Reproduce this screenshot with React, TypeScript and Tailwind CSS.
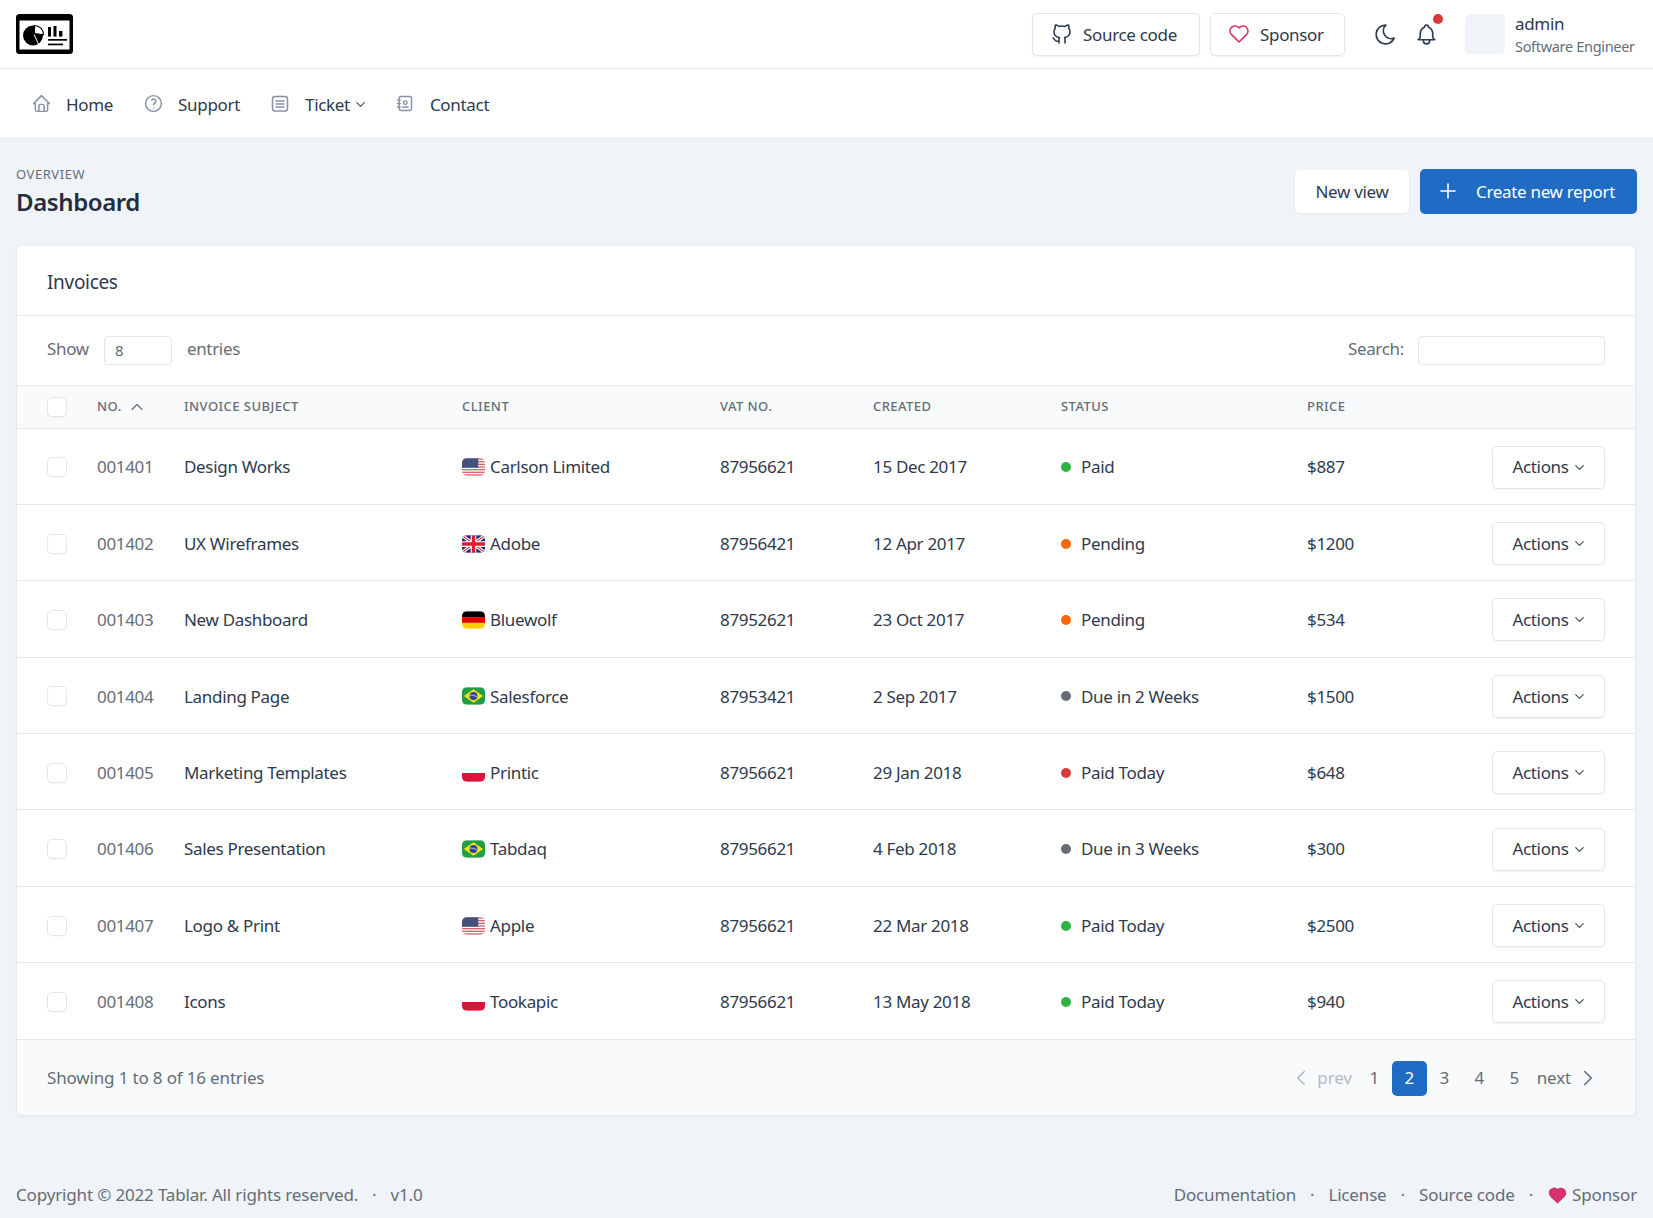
import React from "react";
import {
  TbAddressBook,
  TbBell,
  TbBrandGithub,
  TbChevronDown,
  TbChevronLeft,
  TbChevronRight,
  TbChevronUp,
  TbHeart,
  TbHeartFilled,
  TbHelp,
  TbHome,
  TbMoon,
  TbPlus,
} from "react-icons/tb";

type Flag = "us" | "gb" | "de" | "br" | "pl";

const invoices: {
  no: string;
  subject: string;
  flag: Flag;
  client: string;
  vat: string;
  created: string;
  dot: string;
  status: string;
  price: string;
}[] = [
  { no: "001401", subject: "Design Works", flag: "us", client: "Carlson Limited", vat: "87956621", created: "15 Dec 2017", dot: "bg-[#2fb344]", status: "Paid", price: "$887" },
  { no: "001402", subject: "UX Wireframes", flag: "gb", client: "Adobe", vat: "87956421", created: "12 Apr 2017", dot: "bg-[#f76707]", status: "Pending", price: "$1200" },
  { no: "001403", subject: "New Dashboard", flag: "de", client: "Bluewolf", vat: "87952621", created: "23 Oct 2017", dot: "bg-[#f76707]", status: "Pending", price: "$534" },
  { no: "001404", subject: "Landing Page", flag: "br", client: "Salesforce", vat: "87953421", created: "2 Sep 2017", dot: "bg-[#656d77]", status: "Due in 2 Weeks", price: "$1500" },
  { no: "001405", subject: "Marketing Templates", flag: "pl", client: "Printic", vat: "87956621", created: "29 Jan 2018", dot: "bg-[#d63939]", status: "Paid Today", price: "$648" },
  { no: "001406", subject: "Sales Presentation", flag: "br", client: "Tabdaq", vat: "87956621", created: "4 Feb 2018", dot: "bg-[#656d77]", status: "Due in 3 Weeks", price: "$300" },
  { no: "001407", subject: "Logo & Print", flag: "us", client: "Apple", vat: "87956621", created: "22 Mar 2018", dot: "bg-[#2fb344]", status: "Paid Today", price: "$2500" },
  { no: "001408", subject: "Icons", flag: "pl", client: "Tookapic", vat: "87956621", created: "13 May 2018", dot: "bg-[#2fb344]", status: "Paid Today", price: "$940" },
];

const FlagIcon = ({ code }: { code: Flag }) => (
  <svg viewBox="0 0 24 18" className="mr-[5px] inline-block h-[18px] w-[23px] shrink-0 rounded-[5px]">
    {code === "us" && (
      <>
        <rect width="24" height="18" fill="#fff" />
        {[0, 1, 2, 3, 4, 5, 6].map((i) => (
          <rect key={i} y={i * 2.77} width="24" height="1.38" fill="#d8606a" />
        ))}
        <rect width="17" height="9.7" fill="#41527f" />
      </>
    )}
    {code === "gb" && (
      <>
        <rect width="24" height="18" fill="#16267a" />
        <path d="M0 0L24 18M24 0L0 18" stroke="#fff" strokeWidth="3.5" />
        <path d="M0 0L24 18M24 0L0 18" stroke="#d8202e" strokeWidth="1.2" />
        <path d="M12 0V18M0 9H24" stroke="#fff" strokeWidth="6" />
        <path d="M12 0V18M0 9H24" stroke="#d8202e" strokeWidth="3.6" />
      </>
    )}
    {code === "de" && (
      <>
        <rect width="24" height="6" fill="#000" />
        <rect y="6" width="24" height="6" fill="#dd0000" />
        <rect y="12" width="24" height="6" fill="#ffce00" />
      </>
    )}
    {code === "br" && (
      <>
        <rect width="24" height="18" fill="#229e45" />
        <path d="M12 2L22 9L12 16L2 9Z" fill="#f8e509" />
        <circle cx="12" cy="9" r="4.2" fill="#2b49a3" />
        <path d="M8 8.2C10.5 7.8 14 8.6 16 10.4" stroke="#fff" strokeWidth="0.7" fill="none" />
      </>
    )}
    {code === "pl" && (
      <>
        <rect width="24" height="9" fill="#fff" />
        <rect y="9" width="24" height="9" fill="#dc143c" />
      </>
    )}
  </svg>
);

const Logo = () => (
  <svg viewBox="0 0 57 40" className="h-10 w-[57px]">
    <rect width="57" height="40" rx="3.5" fill="#000" />
    <rect x="3.5" y="6.5" width="50" height="29" fill="#fff" />
    <circle cx="17" cy="21.5" r="10" fill="#000" />
    <path d="M18.5 11.5a9 9 0 0 1 9 9.2l-9-1.2Z" fill="#fff" stroke="#000" strokeWidth="1.1" />
    <path d="M18 20.5L22.5 30" stroke="#fff" strokeWidth="1" />
    <rect x="32" y="13" width="3" height="9.6" fill="#000" />
    <rect x="37.5" y="12" width="3" height="10.6" fill="#000" />
    <rect x="43" y="17" width="3.4" height="5.6" fill="#000" />
    <rect x="32" y="25" width="19" height="1.7" fill="#000" />
    <rect x="32" y="29.6" width="15" height="1.7" fill="#000" />
  </svg>
);

// tabler has no exact match for this one in the pack
const TicketNavIcon = () => (
  <svg viewBox="0 0 20 20" fill="none" stroke="#8593aa" strokeWidth="1.5" strokeLinecap="round" className="h-[20px] w-[20px] shrink-0">
    <rect x="2.5" y="2.5" width="15" height="14.5" rx="2.5" />
    <path d="M6 7H14M6 10H14M6 13H14" />
  </svg>
);

const NavLink = ({ icon, label, chevron, gap }: { icon: React.ReactNode; label: string; chevron?: boolean; gap: string }) => (
  <a className={`flex items-center ${gap}`}>
    <span className="flex w-[18px] -translate-y-[1px] items-center justify-center text-[#8593aa]">{icon}</span>
    <span className="ml-[16px]">{label}</span>
    {chevron && <TbChevronDown className="ml-[3px] h-[15px] w-[15px] text-[#4a5464]" />}
  </a>
);

const Checkbox = () => (
  <span className="block h-5 w-5 rounded-[5px] border border-[#e3e6ea] bg-white shadow-[0_1px_1px_rgba(0,0,0,0.03)]" />
);

const App: React.FC = () => {
  const pages = ["1", "2", "3", "4", "5"];

  return (
    <div className="flex min-h-[1218px] flex-col bg-[#f0f3f8] font-['Noto_Sans','Open_Sans',sans-serif] text-[17px] tracking-[-0.32px] text-[#2e3a4d]">
      <header className="flex h-[69px] items-center border-b border-[#e6e8eb] bg-white px-4">
        <Logo />
        <div className="ml-auto flex items-center">
          <a className="flex h-[43px] w-[168px] items-center rounded-[5px] border border-[#e3e6ea] bg-white pl-[17px] shadow-[0_1px_2px_rgba(0,0,0,0.06)]">
            <TbBrandGithub className="h-[24px] w-[24px]" strokeWidth={1.6} />
            <span className="ml-[9px] pt-[1px]">Source code</span>
          </a>
          <a className="ml-[10px] flex h-[43px] w-[135px] items-center rounded-[5px] border border-[#e3e6ea] bg-white pl-[16px] shadow-[0_1px_2px_rgba(0,0,0,0.06)]">
            <TbHeart className="h-[24px] w-[24px] text-[#d6336c]" strokeWidth={1.6} />
            <span className="ml-[9px] pt-[1px]">Sponsor</span>
          </a>
          <TbMoon className="ml-[28px] h-[25px] w-[25px]" strokeWidth={1.6} />
          <span className="relative ml-[16px] flex">
            <TbBell className="h-[25px] w-[25px]" strokeWidth={1.6} />
            <span className="absolute -right-[4px] -top-[8px] h-[10px] w-[10px] rounded-full bg-[#d63939]" />
          </span>
          <span className="ml-[26px] h-10 w-10 rounded-[5px] bg-[#f0f3f8]" />
          <div className="ml-[10px] flex w-[122px] flex-col whitespace-nowrap">
            <span className="leading-[24px]">admin</span>
            <span className="text-[14.5px] leading-[20px] text-[#656d77]">Software Engineer</span>
          </div>
        </div>
      </header>

      <nav className="flex h-[70px] items-center border-b border-[#e6e8eb] bg-white pl-[32px] pt-[2px]">
        <NavLink icon={<TbHome className="h-[21px] w-[21px] shrink-0" strokeWidth={1.7} />} label="Home" gap="mr-[31px]" />
        <NavLink icon={<TbHelp className="h-[21px] w-[21px] shrink-0" strokeWidth={1.7} />} label="Support" gap="mr-[31px]" />
        <NavLink icon={<TicketNavIcon />} label="Ticket" chevron gap="mr-[28px]" />
        <NavLink icon={<TbAddressBook className="h-[21px] w-[21px] shrink-0" strokeWidth={1.7} />} label="Contact" gap="" />
      </nav>

      <main className="flex flex-1 flex-col px-4">
        <div className="flex h-[106px] items-center justify-between">
          <div className="pb-[1px]">
            <div className="text-[13px] uppercase leading-[18px] tracking-[0.55px] text-[#656d77]">Overview</div>
            <h1 className="mt-[3px] text-[24px] font-semibold leading-[32px] tracking-[-0.4px] text-[#232e3c]">Dashboard</h1>
          </div>
          <div className="flex -translate-y-[1px] items-center">
            <button className="h-[43px] w-[114px] rounded-[5px] bg-white pt-[2px] shadow-[0_1px_2px_rgba(0,0,0,0.05)]">New view</button>
            <button className="ml-[11px] flex h-[45px] w-[217px] items-center rounded-[5px] bg-[#206bc4] pl-[16px] text-white">
              <TbPlus className="h-[24px] w-[24px]" strokeWidth={1.6} />
              <span className="ml-[16px] pt-[2px]">Create new report</span>
            </button>
          </div>
        </div>

        <section className="w-[1620px] overflow-hidden rounded-[5px] border border-[#e7eaee] bg-white shadow-[0_1px_3px_rgba(30,41,59,0.04)]">
          <div className="flex h-[70px] items-center border-b border-[#e6e8eb] pl-[30px] pt-[3px] text-[19px]">Invoices</div>

          <div className="flex h-[70px] items-center justify-between border-b border-[#e6e8eb] px-[30px] text-[#656d77]">
            <div className="flex items-center">
              <span className="-translate-y-[2px]">Show</span>
              <span className="ml-[15px] flex h-[29px] w-[68px] items-center rounded-[4px] border border-[#e3e6ea] pl-[10px] text-[15px]">8</span>
              <span className="ml-[15px] -translate-y-[2px]">entries</span>
            </div>
            <div className="flex items-center">
              <span className="-translate-y-[2px]">Search:</span>
              <span className="ml-[14px] h-[29px] w-[187px] rounded-[4px] border border-[#e3e6ea]" />
            </div>
          </div>

          <table className="w-full table-fixed border-collapse">
            <colgroup>
              <col className="w-[80px]" />
              <col className="w-[87px]" />
              <col className="w-[278px]" />
              <col className="w-[258px]" />
              <col className="w-[153px]" />
              <col className="w-[188px]" />
              <col className="w-[246px]" />
              <col className="w-[120px]" />
              <col />
            </colgroup>
            <thead>
              <tr className="h-[42px] border-b border-[#e6e8eb] bg-[#f8fafc] text-left text-[13px] uppercase tracking-[0.45px] text-[#656d77]">
                <th className="pl-[30px] font-medium"><Checkbox /></th>
                <th className="font-medium">
                  <span className="flex items-center">No.<TbChevronUp className="ml-[5px] h-[20px] w-[20px]" strokeWidth={1.4} /></span>
                </th>
                <th className="font-medium">Invoice Subject</th>
                <th className="font-medium">Client</th>
                <th className="font-medium">VAT No.</th>
                <th className="font-medium">Created</th>
                <th className="font-medium">Status</th>
                <th className="font-medium">Price</th>
                <th />
              </tr>
            </thead>
            <tbody>
              {invoices.map((inv) => (
                <tr key={inv.no} className="h-[76.4px] border-b border-[#e6e8eb] [&>td]:pt-[2px]">
                  <td className="pl-[30px]"><Checkbox /></td>
                  <td className="text-[#656d77]">{inv.no}</td>
                  <td>{inv.subject}</td>
                  <td>
                    <span className="flex items-center"><FlagIcon code={inv.flag} />{inv.client}</span>
                  </td>
                  <td>{inv.vat}</td>
                  <td>{inv.created}</td>
                  <td>
                    <span className="flex items-center">
                      <span className={`mr-[10px] h-[10px] w-[10px] rounded-full ${inv.dot}`} />
                      {inv.status}
                    </span>
                  </td>
                  <td>{inv.price}</td>
                  <td className="pr-[30px] text-right">
                    <button className="inline-flex h-[43px] w-[113px] items-center justify-center rounded-[5px] border border-[#e3e6ea] bg-white pl-[2px] shadow-[0_1px_2px_rgba(0,0,0,0.06)]">
                      Actions<TbChevronDown className="ml-[3px] h-[15px] w-[15px] text-[#4a5464]" />
                    </button>
                  </td>
                </tr>
              ))}
            </tbody>
          </table>

          <div className="flex h-[75px] items-center justify-between bg-[#f8fafc] px-[30px] pt-[2px] tracking-[-0.16px] text-[#656d77]">
            <span>Showing 1 to 8 of 16 entries</span>
            <div className="flex items-center">
              <TbChevronLeft className="h-[26px] w-[26px] text-[#b4bac3]" strokeWidth={1.4} />
              <span className="ml-[3px] text-[#b4bac3]">prev</span>
              <div className="ml-[5px] flex items-center">
                {pages.map((p) => (
                  <span
                    key={p}
                    className={`flex h-[35px] w-[35px] items-center justify-center rounded-[5px] ${p === "2" ? "bg-[#206bc4] text-white" : ""}`}
                  >
                    {p}
                  </span>
                ))}
              </div>
              <span className="ml-[5px]">next</span>
              <TbChevronRight className="ml-[4px] mr-[4px] h-[26px] w-[26px]" strokeWidth={1.4} />
            </div>
          </div>
        </section>

        <footer className="mt-auto flex h-[102px] items-center justify-between pt-[56px] tracking-[-0.16px] text-[#656d77]">
          <div className="flex items-center">
            <span>Copyright © 2022 Tablar. All rights reserved.</span>
            <span className="mx-[14px]">·</span>
            <span>v1.0</span>
          </div>
          <div className="flex items-center">
            <span>Documentation</span>
            <span className="mx-[14px]">·</span>
            <span>License</span>
            <span className="mx-[14px]">·</span>
            <span>Source code</span>
            <span className="mx-[14px]">·</span>
            <TbHeartFilled className="mr-[4px] h-[21px] w-[21px] text-[#d6336c]" />
            <span>Sponsor</span>
          </div>
        </footer>
      </main>
    </div>
  );
};

export default App;
